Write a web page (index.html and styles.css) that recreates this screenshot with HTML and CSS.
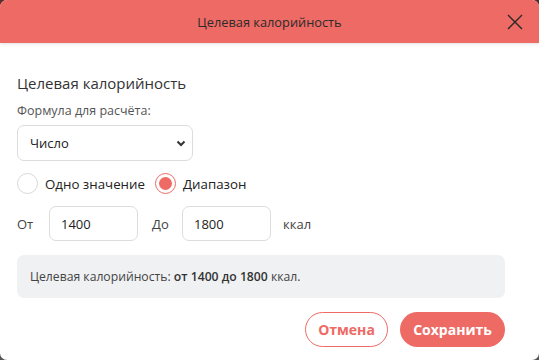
FILE: index.html
```html
<!DOCTYPE html>
<html lang="ru">
<head>
  <meta charset="UTF-8">
  <title>Целевая калорийность</title>
  <link rel="stylesheet" href="styles.css">
</head>
<body>
  <div class="modal">
    <div class="modal-header">
      <h1>Целевая калорийность</h1>
      <button class="close-btn" aria-label="Закрыть">
        <svg width="16" height="16" viewBox="0 0 16 16">
          <path d="M1 1 L15 15 M15 1 L1 15" stroke="#2a2a2a" stroke-width="1.4" fill="none"/>
        </svg>
      </button>
    </div>

    <div class="modal-body">
      <h2>Целевая калорийность</h2>

      <label class="field-label">Формула для расчёта:</label>
      <div class="select-wrap">
        <select class="select">
          <option>Число</option>
        </select>
        <svg class="chevron" width="10" height="7" viewBox="0 0 10 7">
          <path d="M1.5 1.5 L5 5 L8.5 1.5" stroke="#333" stroke-width="2" fill="none"/>
        </svg>
      </div>

      <div class="radios">
        <label class="radio"><span class="dot"></span>Одно значение</label>
        <label class="radio checked"><span class="dot"></span>Диапазон</label>
      </div>

      <div class="range">
        <span class="range-from">От</span>
        <input class="num-input" type="text" value="1400">
        <span class="range-to">До</span>
        <input class="num-input" type="text" value="1800">
        <span class="range-unit">ккал</span>
      </div>

      <div class="summary">
        <p>Целевая калорийность: <b>от 1400 до 1800</b> ккал.</p>
      </div>

      <div class="actions">
        <button class="btn btn-outline">Отмена</button>
        <button class="btn btn-primary">Сохранить</button>
      </div>
    </div>
  </div>
</body>
</html>
```

FILE: styles.css
```css
* {
  margin: 0;
  padding: 0;
  box-sizing: border-box;
  font-family: 'Open Sans', sans-serif;
}

html, body {
  width: 100%;
  height: 100%;
  overflow: hidden;
}

body {
  background: linear-gradient(to bottom, #5a2c2a, #555555);
}

.modal {
  width: 539px;
  height: 360px;
  background: white;
  border-radius: 7px;
  overflow: hidden;
}

.modal-header {
  position: relative;
  height: 43px;
  background: #ee6a64;
  display: flex;
  align-items: center;
  justify-content: center;
  box-shadow: 0 1px 3px rgba(0, 0, 0, 0.12);
}

.modal-header h1 {
  font-size: 12.8px;
  font-weight: 400;
  color: #2b2b2b;
}

.close-btn {
  position: absolute;
  right: 16px;
  top: 14px;
  width: 16px;
  height: 16px;
  background: none;
  border: none;
  cursor: pointer;
}

.close-btn svg {
  display: block;
}

.modal-body {
  padding: 30px 34px 0 17px;
  color: #333;
}

h2 {
  font-size: 15px;
  font-weight: 500;
  color: #333;
  margin-bottom: 9px;
}

.field-label {
  display: block;
  font-size: 12.5px;
  color: #555;
  margin-bottom: 6px;
}

.select-wrap {
  position: relative;
  width: 176px;
}

.select {
  width: 176px;
  height: 36px;
  border: 1px solid #dcdcdc;
  border-radius: 7px;
  background: white;
  appearance: none;
  padding: 0 12px;
  font-size: 13px;
  color: #222;
}

.chevron {
  position: absolute;
  right: 7px;
  top: 15px;
}

.radios {
  display: flex;
  gap: 10px;
  margin-top: 12px;
}

.radio {
  display: flex;
  align-items: center;
  gap: 7px;
  font-size: 13.3px;
  color: #222;
}

.dot {
  width: 21px;
  height: 21px;
  border: 1px solid #d8d8d8;
  border-radius: 50%;
  display: flex;
  align-items: center;
  justify-content: center;
}

.checked .dot {
  border-color: #ee6a64;
}

.checked .dot::after {
  content: "";
  width: 13px;
  height: 13px;
  border-radius: 50%;
  background: #ee6a64;
}

.range {
  display: flex;
  align-items: center;
  margin-top: 12px;
  font-size: 13px;
  color: #444;
}

.range-from {
  width: 32px;
}

.range-to {
  width: 44px;
  padding-left: 14px;
}

.range-unit {
  padding-left: 12px;
}

.num-input {
  width: 89px;
  height: 35px;
  border: 1px solid #dcdcdc;
  border-radius: 7px;
  padding: 0 11px;
  font-size: 13px;
  color: #222;
}

.summary {
  margin-top: 14px;
  height: 43px;
  background: #f0f1f3;
  border-radius: 7px;
  padding: 0 13px;
  display: flex;
  align-items: center;
  font-size: 12.2px;
  color: #444;
}

.summary b {
  font-weight: 600;
  color: #333;
}

.actions {
  display: flex;
  justify-content: flex-end;
  gap: 12px;
  margin-top: 14px;
}

.btn {
  height: 35px;
  border-radius: 18px;
  font-size: 14px;
  font-weight: 700;
  cursor: pointer;
}

.btn-outline {
  width: 83px;
  background: white;
  border: 1px solid #ee6a64;
  color: #ee6a64;
}

.btn-primary {
  width: 105px;
  background: #ee6a64;
  border: none;
  color: white;
}
```
